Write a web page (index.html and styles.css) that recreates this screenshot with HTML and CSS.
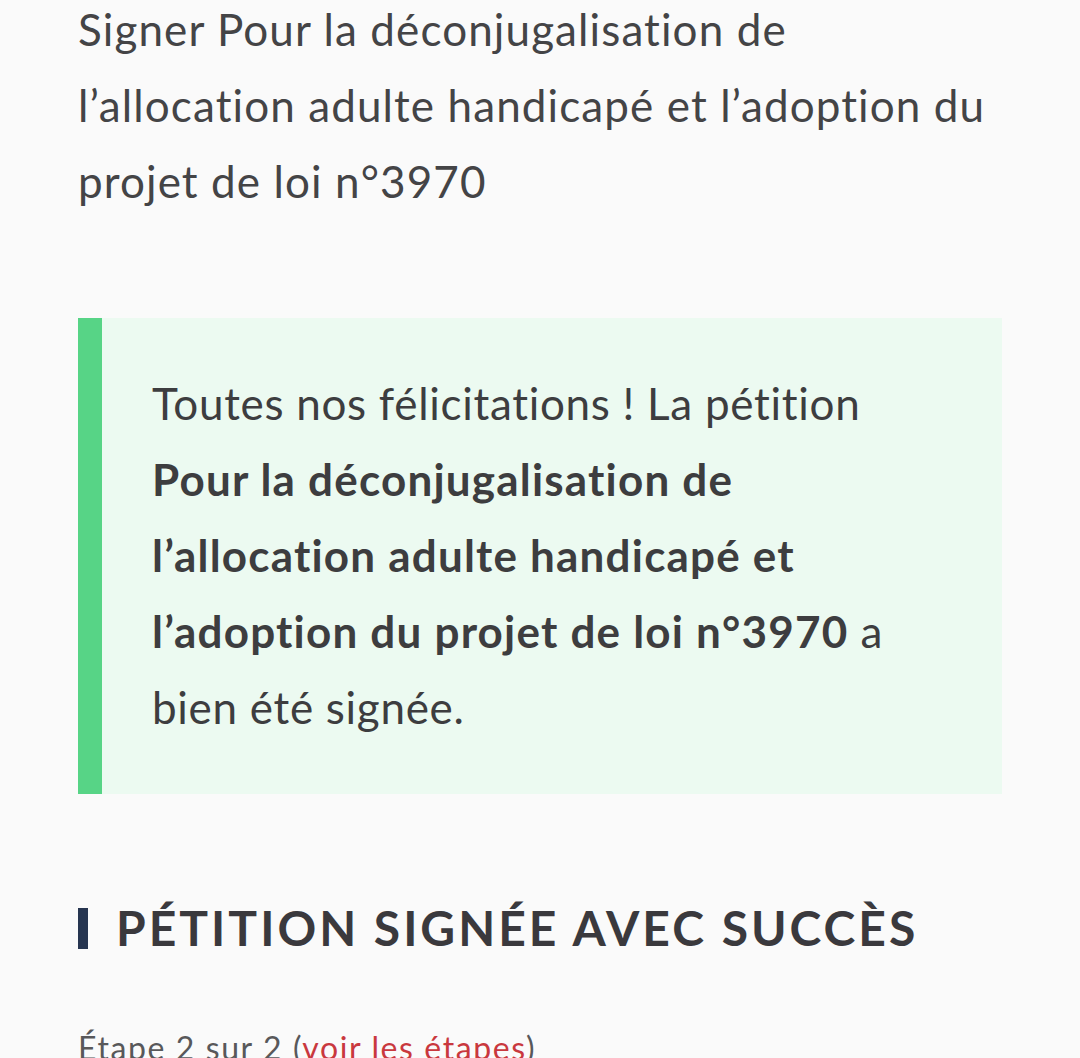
FILE: index.html
```html
<!DOCTYPE html>
<html lang="fr">
<head>
<meta charset="utf-8">
<title>Pétition signée</title>
<link rel="stylesheet" href="styles.css">
</head>
<body>
<main class="page">
  <p class="intro">Signer Pour la déconjugalisation de l’allocation adulte handicapé et l’adoption du projet de loi n°3970</p>

  <div class="notice">
    <p class="notice-text">Toutes nos félicitations ! La pétition <strong>Pour la déconjugalisation de l’allocation adulte handicapé et l’adoption du projet de loi n°3970</strong> a bien été signée.</p>
  </div>

  <h2 class="section-title">Pétition signée avec succès</h2>

  <p class="step">Étape 2 sur 2 (<a class="step-link" href="#">voir les étapes</a>)</p>
</main>
</body>
</html>
```
FILE: styles.css
```css
html, body {
  margin: 0;
  padding: 0;
  background: #fafafa;
}

body {
  font-family: "Lato", "Noto Sans", sans-serif;
  font-variant-ligatures: none;
  color: #3d3d3f;
  overflow: hidden;
}

.page {
  padding: 0 78px;
  margin-top: -9px;
}

.intro {
  margin: 0;
  font-size: 44px;
  line-height: 76px;
  letter-spacing: 1.1px;
  color: #444446;
}

.notice {
  margin-top: 99px;
  background: #ecfaf1;
  border-left: 24px solid #57d486;
  padding: 47px 50px 49px 50px;
}

.notice-text {
  margin: 0;
  font-size: 44px;
  line-height: 76px;
  letter-spacing: 0.7px;
  color: #3d3d3f;
}

.notice-text strong {
  font-weight: 700;
  letter-spacing: 1.2px;
}

.section-title {
  margin: 105px 0 0 0;
  display: flex;
  align-items: center;
  gap: 28px;
  font-size: 48px;
  line-height: 58px;
  font-weight: 700;
  text-transform: uppercase;
  letter-spacing: 3px;
  color: #3a393d;
}

.section-title::before {
  content: "";
  width: 10px;
  height: 41px;
  background: #263550;
  flex: none;
}

.step {
  margin: 67px 0 0 0;
  font-size: 32px;
  line-height: 48px;
  letter-spacing: 1.6px;
  color: #58585a;
}

.step-link {
  color: #c9383e;
  text-decoration: none;
}
```
